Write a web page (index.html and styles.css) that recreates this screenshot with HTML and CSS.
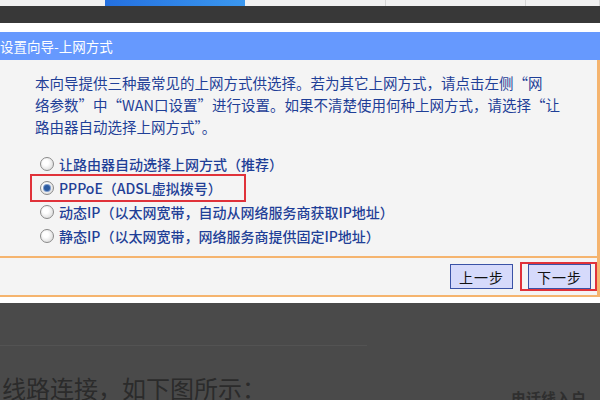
FILE: index.html
```html
<!DOCTYPE html>
<html lang="zh-CN">
<head>
    <meta charset="UTF-8">
    <meta name="viewport" content="width=device-width, initial-scale=1.0">
    <title>设置向导-上网方式</title>
    <link rel="stylesheet" href="styles.css">
</head>
<body>
    <div class="tabs">
        <div></div>
        <div class="tab-on"></div>
        <div class="tab"></div>
        <div class="tab"></div>
        <div class="tab"></div>
    </div>
    <div class="topbar"></div>
    <div class="gap"></div>

    <div class="title">设置向导-上网方式</div>

    <div class="panel">
        <p class="intro">本向导提供三种最常见的上网方式供选择。若为其它上网方式，请点击左侧“网<br>络参数”中“WAN口设置”进行设置。如果不清楚使用何种上网方式，请选择“让<br>路由器自动选择上网方式”。</p>

        <div class="options">
            <label class="opt"><span class="radio"></span>让路由器自动选择上网方式（推荐）</label>
            <label class="opt picked"><span class="radio on"></span>PPPoE（ADSL虚拟拨号）</label>
            <label class="opt"><span class="radio"></span>动态IP（以太网宽带，自动从网络服务商获取IP地址）</label>
            <label class="opt"><span class="radio"></span>静态IP（以太网宽带，网络服务商提供固定IP地址）</label>
        </div>
    </div>

    <div class="btnrow">
        <button class="btn">上一步</button>
        <div class="mark"><button class="btn">下一步</button></div>
    </div>
    <div class="gap small"></div>

    <div class="article">
        <div class="rule"></div>
        <div class="article-row">
            <div class="lead">线路连接，如下图所示：</div>
            <div class="caption">电话线入户</div>
        </div>
    </div>
</body>
</html>
```

FILE: styles.css
```css
body {
    margin: 0;
    width: 600px;
    height: 400px;
    overflow: hidden;
    background: #ffffff;
    font-family: "Noto Sans CJK SC", "Liberation Sans", sans-serif;
}

.tabs {
    display: grid;
    grid-template-columns: 105px 140px 141px 140px 1fr;
    height: 6px;
    background: #f1f1f1;
}
.tab-on {
    background: linear-gradient(to right, #2470e0, #3b98ef);
}
.tab {
    border-right: 1px solid #d6d6d6;
}

.topbar {
    height: 17px;
    background: #383838;
}

.gap {
    height: 9px;
    background: #ffffff;
}
.gap.small {
    height: 6px;
}

.title {
    height: 28px;
    line-height: 28px;
    background: #6699fe;
    color: #ffffff;
    font-size: 13.5px;
}

.panel {
    background: #f4f4f4;
    border-right: 3px solid #f5b46e;
    border-bottom: 2px solid #f5b46e;
    padding: 12px 0 8px 0;
}

.intro {
    margin: 0 0 14px 35px;
    font-size: 14.5px;
    line-height: 22px;
    color: #1f3f97;
}

.options {
    display: flex;
    flex-direction: column;
    align-items: flex-start;
}

.opt {
    display: flex;
    align-items: center;
    height: 24px;
    margin-left: 40px;
    font-size: 14px;
    font-weight: 500;
    color: #1f3f97;
}
.opt.picked {
    margin: -2px 0 -2px 30px;
    padding: 0 22px 0 8px;
    border: 2px solid #e0323a;
}

.radio {
    width: 12px;
    height: 12px;
    margin-right: 5px;
    border: 1px solid #8a8a8a;
    border-radius: 50%;
    background: radial-gradient(circle at 40% 40%, #ffffff 25%, #cfcfcf 100%);
    display: flex;
    align-items: center;
    justify-content: center;
}
.radio.on::after {
    content: "";
    width: 6px;
    height: 6px;
    border-radius: 50%;
    background: #2b5aa0;
    box-shadow: 0 0 0 1px #7c9bcc;
}

.btnrow {
    display: flex;
    justify-content: flex-end;
    align-items: center;
    gap: 7px;
    height: 37px;
    background: #f4f4f4;
    border-right: 3px solid #f5b46e;
    border-bottom: 2px solid #f5b46e;
}

.btn {
    width: 63px;
    height: 25px;
    padding: 0;
    background: #d6dafb;
    border: 1px solid #3a52a6;
    color: #111111;
    font-family: "Noto Sans CJK SC", sans-serif;
    font-size: 14px;
    letter-spacing: 1px;
}

.mark {
    display: flex;
    align-items: center;
    height: 25px;
    padding: 0 4px 0 6px;
    border: 2px solid #e0323a;
}

.article {
    height: 98px;
    background: #4a4a4a;
    overflow: hidden;
}
.rule {
    width: 367px;
    height: 1px;
    margin-top: 42px;
    background: #535353;
}
.article-row {
    display: flex;
    justify-content: space-between;
    margin-top: 27px;
}
.lead {
    font-size: 24px;
    line-height: 30px;
    color: #2b2b2b;
    padding-left: 2px;
}
.caption {
    margin-top: 14px;
    width: 89px;
    font-size: 15px;
    font-weight: bold;
    color: #2f2f2f;
    white-space: nowrap;
}
```
